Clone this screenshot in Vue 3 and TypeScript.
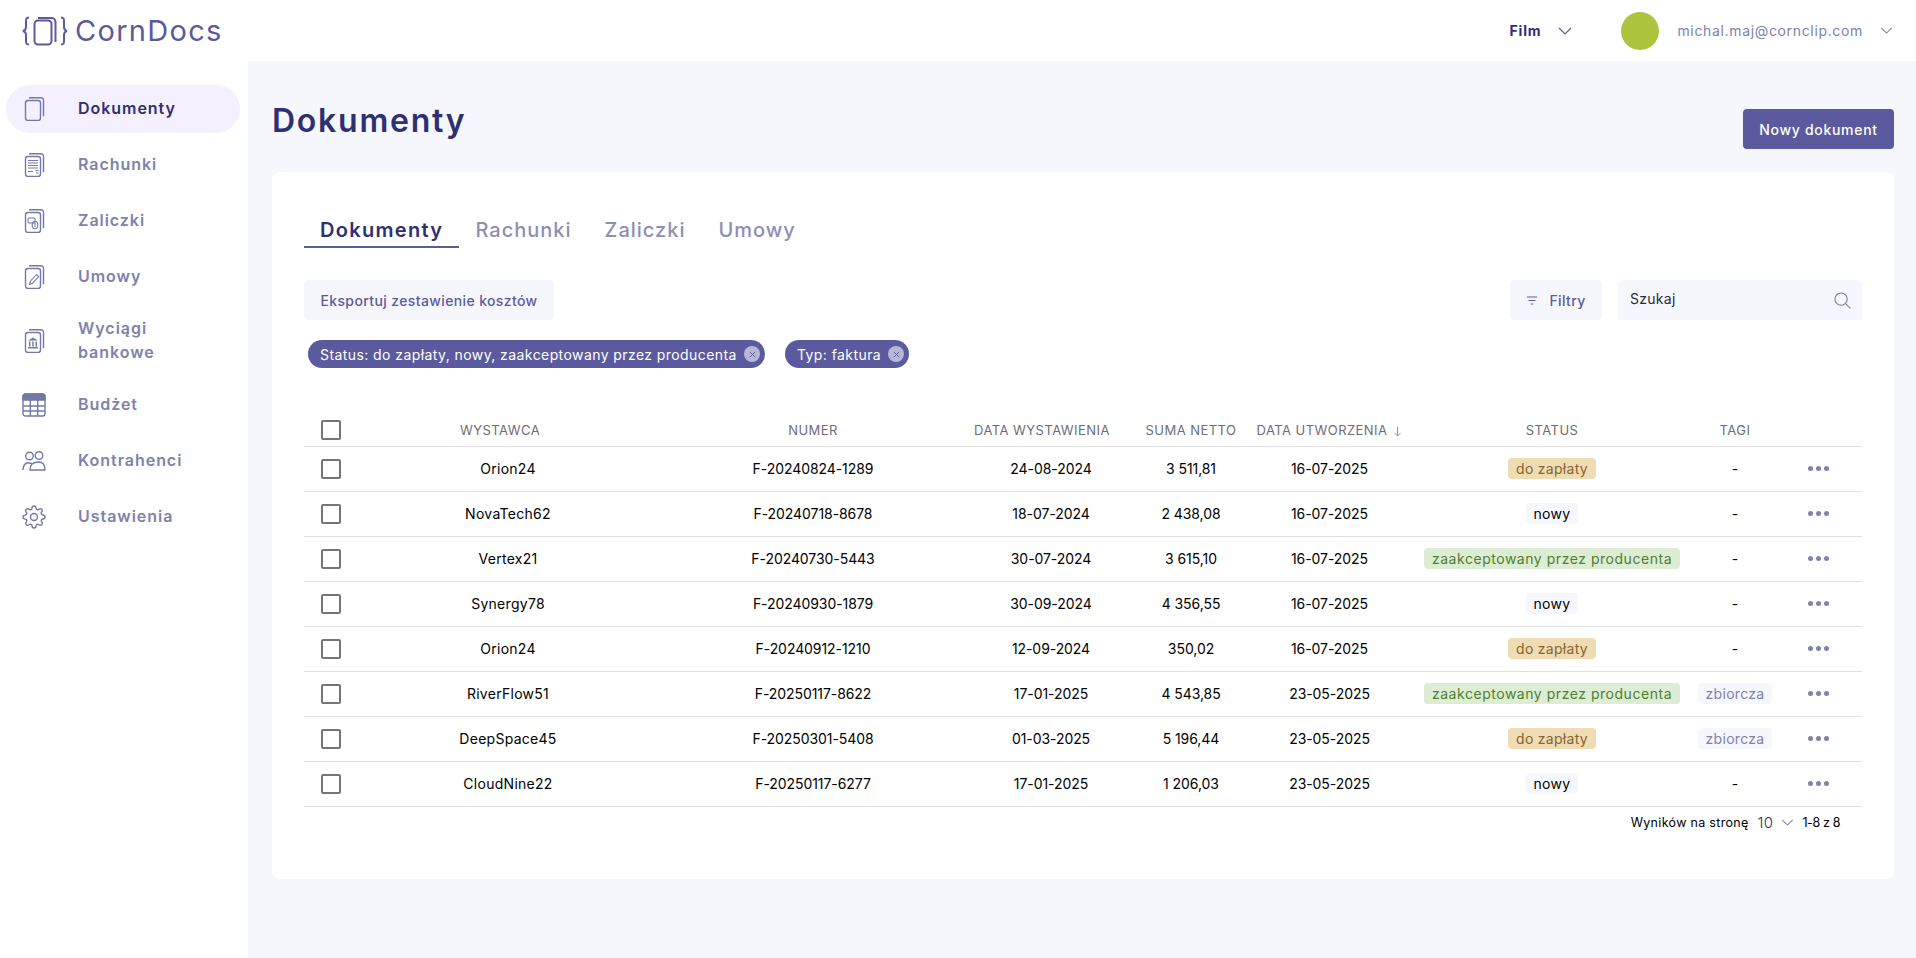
<script setup lang="ts">
interface Row { vendor: string; number: string; issued: string; net: string; created: string; status: 'due' | 'new' | 'ok'; tag: string }
const statusLabel: Record<Row['status'], string> = { due: 'do zapłaty', new: 'nowy', ok: 'zaakceptowany przez producenta' }
const rows: Row[] = [
  { vendor: 'Orion24', number: 'F-20240824-1289', issued: '24-08-2024', net: '3 511,81', created: '16-07-2025', status: 'due', tag: '' },
  { vendor: 'NovaTech62', number: 'F-20240718-8678', issued: '18-07-2024', net: '2 438,08', created: '16-07-2025', status: 'new', tag: '' },
  { vendor: 'Vertex21', number: 'F-20240730-5443', issued: '30-07-2024', net: '3 615,10', created: '16-07-2025', status: 'ok', tag: '' },
  { vendor: 'Synergy78', number: 'F-20240930-1879', issued: '30-09-2024', net: '4 356,55', created: '16-07-2025', status: 'new', tag: '' },
  { vendor: 'Orion24', number: 'F-20240912-1210', issued: '12-09-2024', net: '350,02', created: '16-07-2025', status: 'due', tag: '' },
  { vendor: 'RiverFlow51', number: 'F-20250117-8622', issued: '17-01-2025', net: '4 543,85', created: '23-05-2025', status: 'ok', tag: 'zbiorcza' },
  { vendor: 'DeepSpace45', number: 'F-20250301-5408', issued: '01-03-2025', net: '5 196,44', created: '23-05-2025', status: 'due', tag: 'zbiorcza' },
  { vendor: 'CloudNine22', number: 'F-20250117-6277', issued: '17-01-2025', net: '1 206,03', created: '23-05-2025', status: 'new', tag: '' },
]
const nav = [
  { label: 'Dokumenty', icon: 'doc', active: true },
  { label: 'Rachunki', icon: 'bill' },
  { label: 'Zaliczki', icon: 'advance' },
  { label: 'Umowy', icon: 'contract' },
  { label: 'Wyciągi bankowe', icon: 'bank' },
  { label: 'Budżet', icon: 'table' },
  { label: 'Kontrahenci', icon: 'people' },
  { label: 'Ustawienia', icon: 'gear' },
]
const tabs = ['Dokumenty', 'Rachunki', 'Zaliczki', 'Umowy']
</script>

<template>
  <div class="app">
    <header class="topbar">
      <div class="logo">
        <svg class="logo-mark" viewBox="0 0 46 30" fill="none" stroke="currentColor" stroke-width="2">
          <path d="M7 1.500C4 1.500 4 3 4 6v5c0 2.500-1 3.500-3 4 2 .5 3 1.500 3 4v5c0 3 0 4.500 3 4.500" />
          <path d="M39 1.500c3 0 3 1.500 3 4.500v5c0 2.500 1 3.500 3 4-2 .5-3 1.500-3 4v5c0 3 0 4.500-3 4.500" />
          <rect x="12.500" y="4.500" width="17" height="24" rx="3.500" />
          <path d="M16 2h13.500a4 4 0 0 1 4 4v20" />
        </svg>
        <span>CornDocs</span>
      </div>
      <div class="top-right">
        <span class="film">Film</span>
        <svg class="chev film-chev" viewBox="0 0 14 8"><path d="M1 1l6 6 6-6" /></svg>
        <span class="avatar"></span>
        <span class="email">michal.maj@cornclip.com</span>
        <svg class="chev email-chev" viewBox="0 0 14 8"><path d="M1 1l6 6 6-6" /></svg>
      </div>
    </header>

    <div class="body">
      <aside class="sidebar">
        <a v-for="item in nav" :key="item.label" class="nav-item" :class="{ active: item.active, tall: item.icon === 'bank' }">
          <span class="nav-icon">
            <svg viewBox="0 0 24 24" fill="none" stroke="currentColor" stroke-width="1.400" stroke-linejoin="round">
              <template v-if="['doc','bill','advance','contract','bank'].includes(item.icon)">
                <rect x="3.500" y="3.500" width="15" height="20" rx="2.500" />
                <path d="M7 .8h12a2.500 2.500 0 0 1 2.500 2.500v16" />
              </template>
              <path v-if="item.icon === 'bill'" stroke-width="1.100" d="M6 7.500h10M6 10h10M6 12.500h10M6 15h10M6 18.500h5M13.500 17.500h3M14 20h2.500" />
              <g v-if="item.icon === 'advance'" stroke-width="1.100">
                <rect x="6" y="9" width="7" height="5" rx="1" />
                <ellipse cx="13" cy="16" rx="2.800" ry="3.800" />
                <path d="M13 14v4" />
              </g>
              <path v-if="item.icon === 'contract'" stroke-width="1.100" d="M7.500 19.500l1-3.500 6-6.500 2.200 2.200-6 6.500z" />
              <g v-if="item.icon === 'bank'" fill="currentColor" stroke="none">
                <path d="M11 8.500l5 3H6z" />
                <path d="M7 12.500h1.500v5H7zM10.250 12.500h1.500v5h-1.500zM13.500 12.500H15v5h-1.500zM6 18h10v1.500H6z" />
              </g>
              <g v-if="item.icon === 'table'">
                <path d="M1 7V3.500A2.500 2.500 0 0 1 3.500 1h17A2.500 2.500 0 0 1 23 3.500V7z" fill="currentColor" />
                <rect x="1" y="1" width="22" height="22" rx="2.500" />
                <path d="M1 13h22M1 18h22M8.300 7v16M15.700 7v16" />
              </g>
              <g v-if="item.icon === 'people'">
                <circle cx="7.500" cy="7" r="3.800" />
                <circle cx="17" cy="6.500" r="3.800" />
                <path d="M1 21c0-4 1.500-6.500 4.500-7.300 1 .5 3 .6 4 .3M8 21c0-5 3-8 8.500-8s6.500 4 6.500 8z" />
              </g>
              <g v-if="item.icon === 'gear'">
                <circle cx="12" cy="12" r="3.500" />
                <path d="M19.400 15a1.650 1.650 0 0 0 .33 1.820l.06.06a2 2 0 0 1 0 2.830 2 2 0 0 1-2.830 0l-.06-.06a1.650 1.650 0 0 0-1.820-.33 1.650 1.650 0 0 0-1 1.510V21a2 2 0 0 1-2 2 2 2 0 0 1-2-2v-.09A1.650 1.650 0 0 0 9 19.400a1.650 1.650 0 0 0-1.820.33l-.06.06a2 2 0 0 1-2.830 0 2 2 0 0 1 0-2.830l.06-.06a1.650 1.650 0 0 0 .33-1.820 1.650 1.650 0 0 0-1.510-1H3a2 2 0 0 1-2-2 2 2 0 0 1 2-2h.09A1.650 1.650 0 0 0 4.600 9a1.650 1.650 0 0 0-.33-1.820l-.06-.06a2 2 0 0 1 0-2.830 2 2 0 0 1 2.830 0l.06.06a1.650 1.650 0 0 0 1.820.33H9a1.650 1.650 0 0 0 1-1.510V3a2 2 0 0 1 2-2 2 2 0 0 1 2 2v.09a1.650 1.650 0 0 0 1 1.510 1.650 1.650 0 0 0 1.820-.33l.06-.06a2 2 0 0 1 2.830 0 2 2 0 0 1 0 2.830l-.06.06a1.650 1.650 0 0 0-.33 1.820V9a1.650 1.650 0 0 0 1.510 1H21a2 2 0 0 1 2 2 2 2 0 0 1-2 2h-.09a1.650 1.650 0 0 0-1.510 1z" />
              </g>
            </svg>
          </span>
          <span class="nav-label">{{ item.label }}</span>
        </a>
      </aside>

      <main class="main">
        <div class="page-head">
          <h1>Dokumenty</h1>
          <button class="primary">Nowy dokument</button>
        </div>

        <section class="card">
          <nav class="tabs">
            <span v-for="(tab, i) in tabs" :key="tab" class="tab" :class="{ current: i === 0 }">{{ tab }}</span>
          </nav>

          <div class="toolbar">
            <button class="soft export">Eksportuj zestawienie kosztów</button>
            <div class="tools-right">
              <button class="soft filter">
                <svg viewBox="0 0 14 10" fill="none" stroke="currentColor" stroke-width="1.200"><path d="M1 1h12M3 5h8M5.500 9h3" /></svg>
                Filtry
              </button>
              <div class="search">
                <span>Szukaj</span>
                <svg viewBox="0 0 18 18" fill="none" stroke="#7d83ab" stroke-width="1.200"><circle cx="7.500" cy="7.500" r="6.500" /><path d="M12.300 12.300l5 5" /></svg>
              </div>
            </div>
          </div>

          <div class="chips">
            <span class="chip">Status: do zapłaty, nowy, zaakceptowany przez producenta
              <i class="chip-x"><svg viewBox="0 0 8 8"><path d="M1 1l6 6M7 1l-6 6" /></svg></i>
            </span>
            <span class="chip second">Typ: faktura
              <i class="chip-x"><svg viewBox="0 0 8 8"><path d="M1 1l6 6M7 1l-6 6" /></svg></i>
            </span>
          </div>

          <div class="table">
            <div class="tr head">
              <div class="td"><span class="box"></span></div>
              <div class="td vendor-head">WYSTAWCA</div>
              <div class="td">NUMER</div>
              <div class="td issued-head">DATA WYSTAWIENIA</div>
              <div class="td">SUMA NETTO</div>
              <div class="td sort">DATA UTWORZENIA
                <svg viewBox="0 0 10 12" fill="none" stroke="#7d83ab" stroke-width="1"><path d="M5 1v10M1.500 7.500L5 11l3.500-3.500" /></svg>
              </div>
              <div class="td status-col">STATUS</div>
              <div class="td">TAGI</div>
              <div class="td"></div>
            </div>
            <div v-for="r in rows" :key="r.number" class="tr">
              <div class="td"><span class="box"></span></div>
              <div class="td">{{ r.vendor }}</div>
              <div class="td num">{{ r.number }}</div>
              <div class="td num">{{ r.issued }}</div>
              <div class="td num">{{ r.net }}</div>
              <div class="td num">{{ r.created }}</div>
              <div class="td status-col"><span class="pill" :class="r.status">{{ statusLabel[r.status] }}</span></div>
              <div class="td"><span v-if="r.tag" class="pill tag">{{ r.tag }}</span><template v-else>-</template></div>
              <div class="td dots-col"><span class="dots"><i></i><i></i><i></i></span></div>
            </div>
          </div>

          <div class="pager">
            <span>Wyników na stronę</span>
            <span class="per">10</span>
            <svg class="chev pager-chev" viewBox="0 0 14 8"><path d="M1 1l6 6 6-6" /></svg>
            <span class="range">1-8 z 8</span>
          </div>
        </section>
      </main>
    </div>
  </div>
</template>

<style>
html, body { margin: 0; background: #fff; }
</style>

<style scoped>
.app {
  height: 958px;
  display: flex;
  flex-direction: column;
  font-family: Inter, "Noto Sans", sans-serif;
  color: #000;
  overflow: hidden;
}
.topbar {
  height: 61px;
  flex: none;
  display: flex;
  justify-content: space-between;
  align-items: center;
  padding: 0 23px 0 22px;
  background: #fff;
}
.logo {
  display: flex;
  align-items: center;
  gap: 7px;
  color: #5c5a9e;
  font-size: 29px;
  letter-spacing: 0.045em;
  font-weight: 400;
}
.logo-mark { width: 46px; height: 30px; }
.top-right { display: flex; align-items: center; }
.film { font-size: 14px; font-weight: 700; color: #2f2f73; letter-spacing: 0.06em; }
.chev { fill: none; stroke: #7d83ab; stroke-width: 1.200; }
.film-chev { width: 14px; height: 8px; margin: 0 49px 0 17px; stroke: #5a5e90; }
.avatar { width: 38px; height: 38px; border-radius: 50%; background: #adc43f; margin-right: 18px; }
.email { font-size: 14px; color: #7d83ab; letter-spacing: 0.047em; }
.email-chev { width: 13px; height: 7px; margin-left: 17px; }

.body { flex: 1; display: flex; min-height: 0; }
.sidebar {
  width: 248px;
  flex: none;
  box-sizing: border-box;
  padding: 24px 8px 0 6px;
  display: flex;
  flex-direction: column;
  gap: 8px;
  background: #fff;
}
.nav-item {
  display: flex;
  align-items: center;
  min-height: 48px;
  border-radius: 24px;
  color: #7d83ab;
  font-size: 16px;
  font-weight: 600;
  line-height: 24px;
  letter-spacing: 0.06em;
}
.nav-item.tall { min-height: 64px; }
.nav-item.active { background: #f4f0fd; color: #2f2f73; }
.nav-icon { width: 72px; padding-left: 16px; box-sizing: border-box; display: flex; flex: none; color: #7378a8; }
.nav-icon svg { width: 24px; height: 24px; }
.nav-label { width: 130px; margin-bottom: 2px; }

.main { flex: 1; min-width: 0; background: #f6f7fc; padding: 0 22px 0 24px; }
.page-head { height: 111px; display: flex; justify-content: space-between; }
h1 {
  margin: 38px 0 0;
  font-size: 32px;
  line-height: 44px;
  font-weight: 600;
  color: #2f2f73;
  letter-spacing: 0.055em;
}
.primary {
  margin-top: 48px;
  width: 151px;
  height: 40px;
  border: 0;
  border-radius: 4px;
  background: #5c5a9e;
  color: #fff;
  font: 500 14px Inter, sans-serif;
  letter-spacing: 0.05em;
}
.card {
  background: #fff;
  border-radius: 8px;
  height: 707px;
  box-sizing: border-box;
  padding: 0 32px;
}
.tabs { display: flex; height: 76px; align-items: flex-end; }
.tab {
  padding: 0 16.500px;
  height: 36px;
  line-height: 36px;
  font-size: 20px;
  font-weight: 500;
  color: #8b8fb3;
  letter-spacing: 0.05em;
  box-sizing: border-box;
}
.tab.current {
  padding: 0 16px;
  color: #2f2f73;
  border-bottom: 2px solid #5c5a9e;
  width: 155px;
  font-weight: 600;
  letter-spacing: 0.065em;
}
.toolbar { display: flex; justify-content: space-between; margin-top: 32px; }
.soft {
  height: 40px;
  border: 0;
  border-radius: 4px;
  background: #f6f7fc;
  color: #5c5a9e;
  font: 500 14px Inter, sans-serif;
  letter-spacing: 0.027em;
}
.export { width: 250px; }
.tools-right { display: flex; gap: 16px; }
.filter { width: 92px; display: flex; align-items: center; justify-content: center; gap: 11px; }
.filter svg { width: 12px; height: 9px; }
.search {
  width: 244px;
  height: 40px;
  box-sizing: border-box;
  padding: 0 12px;
  background: #f6f7fc;
  border-radius: 4px 4px 0 0;
  display: flex;
  justify-content: space-between;
  align-items: center;
  font-size: 14px;
  color: #2b2b3a;
  letter-spacing: 0.02em;
}
.search span { margin-bottom: 4px; }
.search svg { width: 17px; height: 17px; margin-right: -1px; }
.chips { display: flex; margin: 20px 0 0 4px; height: 28px; }
.chip {
  display: inline-flex;
  align-items: center;
  justify-content: space-between;
  width: 457px;
  height: 28px;
  box-sizing: border-box;
  padding: 0 5px 0 12px;
  border-radius: 14px;
  background: #5c5a9e;
  color: #fff;
  font-size: 14px;
  letter-spacing: 0.03em;
  white-space: nowrap;
}
.chip.second { width: 124px; margin-left: 20px; }
.chip-x {
  width: 16px;
  height: 16px;
  border-radius: 50%;
  background: #b8b6d6;
  display: flex;
  align-items: center;
  justify-content: center;
}
.chip-x svg { width: 7px; height: 7px; fill: none; stroke: #5c5a9e; stroke-width: 1; }

.table { margin-top: 48px; font-size: 14px; }
.tr {
  display: grid;
  grid-template-columns: 54px 300px 310px 166px 114px 163px 264px 120px 67px;
  height: 45px;
  box-sizing: border-box;
  border-bottom: 1px solid #e0e0e0;
  letter-spacing: 0.02em;
}
.tr.head {
  height: 31px;
  font-size: 13px;
  color: #6d6d78;
  letter-spacing: 0.035em;
}
.td {
  display: flex;
  align-items: center;
  justify-content: center;
  white-space: nowrap;
  padding-bottom: 1px;
}
.num { letter-spacing: -0.005em; }
.head .td { padding-bottom: 2px; }
.vendor-head { padding-right: 16px; }
.issued-head { padding-right: 18px; }
.sort { gap: 6px; }
.sort svg { width: 9px; height: 11px; margin-top: 2px; flex: none; }
.status-col { padding-left: 18px; }
.dots-col { padding-right: 21px; }
.box {
  width: 20px;
  height: 20px;
  box-sizing: border-box;
  border: 2px solid #757575;
  border-radius: 2px;
}
.pill {
  height: 21px;
  line-height: 21px;
  padding: 0 8px;
  border-radius: 4px;
  background: #f6f7fc;
  font-size: 14px;
}
.pill.due { background: #efdcb4; color: #87662a; }
.pill.ok { background: #dcedd4; color: #4f7f2f; letter-spacing: 0.038em; }
.pill.tag { color: #7d83ab; }
.dots { display: flex; gap: 3px; }
.dots i { width: 5px; height: 5px; border-radius: 50%; background: #7d83ab; }
.pager {
  display: flex;
  justify-content: flex-end;
  align-items: center;
  height: 30px;
  padding-right: 22px;
  font-size: 12.500px;
  letter-spacing: 0.025em;
}
.per { font-size: 15px; font-weight: 300; margin: 0 8px 0 9px; color: #333; }
.pager-chev { width: 13px; height: 7px; margin-right: 8px; }
.range { letter-spacing: -0.03em; }
</style>
